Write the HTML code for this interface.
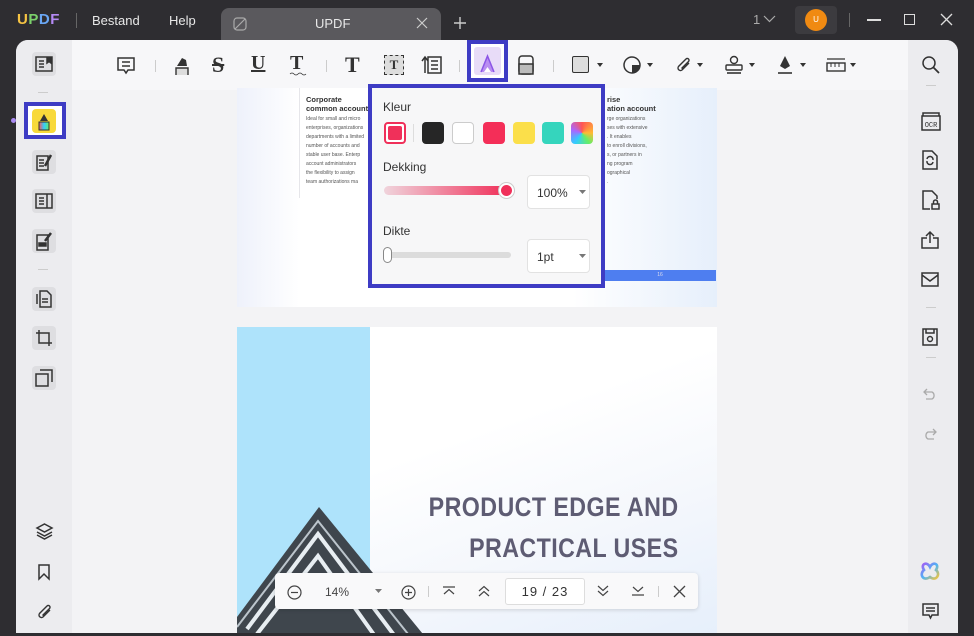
<!DOCTYPE html>
<html><head><meta charset="utf-8"><style>
*{margin:0;padding:0;box-sizing:border-box}
body{width:974px;height:636px;overflow:hidden;background:#2e2d31;font-family:"Liberation Sans",sans-serif;position:relative}
.abs{position:absolute}
svg{position:absolute;overflow:visible}
.tb{color:#e8e8e8;font-size:13px;top:13px}
.ic{fill:none;stroke:#333;stroke-width:1.5}
.sq{position:absolute;width:22px;height:22px;border-radius:4px;top:122px}
.txt{font-size:5px;color:#555;line-height:9px}
</style></head><body>
<!-- top bar -->
<div class="abs" style="left:17px;top:11px;font-weight:bold;font-size:15px;letter-spacing:0.5px"><span style="color:#f6c343">U</span><span style="color:#7bd06b">P</span><span style="color:#6aa7f5">D</span><span style="color:#b58af5">F</span></div>
<div class="abs" style="left:76px;top:13px;width:1px;height:15px;background:#666"></div>
<div class="abs tb" style="left:92px">Bestand</div>
<div class="abs tb" style="left:169px">Help</div>
<div class="abs" style="left:221px;top:8px;width:220px;height:32px;background:#5a595d;border-radius:8px 8px 0 0"></div>
<svg style="left:233px;top:17px" width="14" height="14"><rect x="1" y="1" width="12" height="12" rx="3" fill="none" stroke="#aaa" stroke-width="1.2"/><path d="M2 12L12 2" stroke="#aaa" stroke-width="1.2"/></svg>
<div class="abs tb" style="left:315px;top:16px">UPDF</div>
<svg style="left:417px;top:18px" width="10" height="10"><path d="M0 0L10 10M10 0L0 10" stroke="#ccc" stroke-width="1.2"/></svg>
<svg style="left:454px;top:17px" width="12" height="12"><path d="M6 0V12M0 6H12" stroke="#ccc" stroke-width="1.4"/></svg>
<div class="abs" style="left:753px;top:12px;color:#aaa;font-size:13px">1</div>
<svg style="left:764px;top:16px" width="11" height="7"><path d="M0 0L5.5 5.5L11 0" fill="none" stroke="#aaa" stroke-width="1.2"/></svg>
<div class="abs" style="left:795px;top:6px;width:42px;height:28px;background:#3c3b3f;border-radius:4px"></div>
<div class="abs" style="left:805px;top:9px;width:22px;height:22px;border-radius:50%;background:#f08a12;color:#fff;font-size:8px;text-align:center;line-height:22px">U</div>
<div class="abs" style="left:849px;top:13px;width:1px;height:14px;background:#666"></div>
<div class="abs" style="left:867px;top:19px;width:14px;height:1.5px;background:#ddd"></div>
<div class="abs" style="left:904px;top:14px;width:11px;height:11px;border:1.3px solid #ddd"></div>
<svg style="left:941px;top:14px" width="11" height="11"><path d="M0 0L11 11M11 0L0 11" stroke="#ddd" stroke-width="1.3"/></svg>

<!-- panels -->
<div class="abs" style="left:16px;top:40px;width:942px;height:593px;background:#f3f3f5;border-radius:12px 12px 0 0"></div>
<div class="abs" style="left:16px;top:40px;width:56px;height:593px;background:#ececef;border-radius:12px 0 0 0"></div>
<div class="abs" style="left:908px;top:40px;width:50px;height:593px;background:#ececef;border-radius:0 12px 0 0"></div>
<div class="abs" style="left:72px;top:40px;width:836px;height:50px;background:#f7f7f9"></div>

<!-- pages -->
<div class="abs" style="left:237px;top:88px;width:480px;height:219px;background:linear-gradient(90deg,#eef1fb 0%,#fff 13%,#fff 70%,#e6effb 100%)">
 <div class="abs" style="left:62px;top:0;width:1px;height:110px;background:#e6e6ea"></div>
 <div class="abs" style="left:69px;top:7px;font-size:7.5px;font-weight:bold;color:#333;line-height:9px">Corporate<br>common account</div>
 <div class="abs txt" style="left:69px;top:27px;width:80px">Ideal for small and micro<br>enterprises, organizations<br>departments with a limited<br>number of accounts and<br>stable user base. Enterp<br>account administrators<br>the flexibility to assign<br>team authorizations ma</div>
 <div class="abs" style="left:370px;top:7px;font-size:7.5px;font-weight:bold;color:#333;line-height:9px">rise<br>ation account</div>
 <div class="abs txt" style="left:370px;top:27px;width:90px">rge organizations<br>ses with extensive<br>. It enables<br>to enroll divisions,<br>s, or partners in<br>ng program<br>ographical<br>.</div>
 <div class="abs" style="left:367px;top:182px;width:112px;height:11px;background:#4e7ef0;color:#dde;font-size:5px;text-align:center;line-height:11px">16</div>
</div>
<div class="abs" style="left:237px;top:327px;width:480px;height:306px;background:linear-gradient(160deg,#fff 40%,#f4f7fc 70%,#e6effb 100%);overflow:hidden">
 <div class="abs" style="left:0;top:0;width:133px;height:306px;background:#aee3fb"></div>
 <svg style="left:0;top:172px" width="200" height="140"><path d="M0 118L82 8L190 140H0Z" fill="#3f464d"/><path d="M10 130L81 35L160 140" fill="none" stroke="#e8eef2" stroke-width="4"/><path d="M20 135L81 57L140 140" fill="none" stroke="#e8eef2" stroke-width="4"/><path d="M0 128L81 22L175 140" fill="none" stroke="#bcc5cc" stroke-width="2"/></svg>
 <div class="abs" style="right:38px;top:160px;text-align:right;font-size:27px;font-weight:bold;color:#5e5c73;line-height:41px;letter-spacing:0.5px;transform:scaleX(0.86);transform-origin:right">PRODUCT EDGE AND<br>PRACTICAL USES</div>
</div>

<!-- toolbar icons -->
<svg style="left:117px;top:57px" width="18" height="18" class="ic"><path class="ic" d="M1 1H17V13H11L9 16L7 13H1Z M5 5H13M5 9H13"/></svg>
<div class="abs" style="left:155px;top:60px;width:1px;height:12px;background:#ccc"></div>
<svg style="left:174px;top:56px" width="16" height="20"><path d="M3 10L8 2L12 4L13 10Z" fill="#333"/><path d="M2 19V12H14V19" fill="#ddd" stroke="#333" stroke-width="1.4"/></svg>
<div class="abs" style="left:212px;top:52px;font-size:22px;font-weight:bold;color:#333;text-decoration:line-through;font-family:'Liberation Serif',serif">S</div>
<div class="abs" style="left:251px;top:52px;font-size:20px;font-weight:bold;color:#333;text-decoration:underline;font-family:'Liberation Serif',serif">U</div>
<div class="abs" style="left:290px;top:52px;font-size:20px;font-weight:bold;color:#333;font-family:'Liberation Serif',serif">T</div>
<svg style="left:290px;top:72px" width="18" height="4"><path d="M0 2Q2 0 4 2T8 2T12 2T16 2" fill="none" stroke="#333" stroke-width="0.8"/></svg>
<div class="abs" style="left:326px;top:60px;width:1px;height:12px;background:#ccc"></div>
<div class="abs" style="left:345px;top:52px;font-size:22px;font-weight:bold;color:#333;font-family:'Liberation Serif',serif">T</div>
<div class="abs" style="left:384px;top:55px;width:20px;height:20px;border:1.5px dashed #333;background:#ddd;font-size:13px;font-weight:bold;text-align:center;line-height:17px;font-family:'Liberation Serif',serif;color:#333">T</div>
<svg style="left:421px;top:55px" width="22" height="20" class="ic"><path class="ic" d="M7 2H20V18H7Z M10 6H17M10 10H17M10 14H17 M4 18V3M1 6L4 2L7 6"/></svg>
<div class="abs" style="left:459px;top:60px;width:1px;height:12px;background:#ccc"></div>
<div class="abs" style="left:467px;top:40px;width:41px;height:42px;border:4px solid #3e3cc4;background:#fff"></div>
<div class="abs" style="left:474px;top:47px;width:27px;height:28px;background:#e8dcf8;border-radius:3px"></div>
<svg style="left:479px;top:54px" width="17" height="20"><path d="M2 18L8.5 2L15 18" fill="#b98df2" stroke="#8b55e6" stroke-width="1.5"/><path d="M5 18L8.5 13L12 18" fill="#fff"/></svg>
<svg style="left:518px;top:55px" width="16" height="20"><rect x="1" y="1" width="14" height="18" rx="3" fill="none" stroke="#333" stroke-width="1.5"/><rect x="1" y="9" width="14" height="10" fill="#bbb" stroke="#333" stroke-width="1.5"/></svg>
<div class="abs" style="left:553px;top:60px;width:1px;height:12px;background:#ccc"></div>
<div class="abs" style="left:572px;top:56px;width:17px;height:17px;border:1.5px solid #333;background:#ddd;border-radius:2px"></div>
<svg style="left:597px;top:63px" width="6" height="4"><path d="M0 0H6L3 4Z" fill="#333"/></svg>
<svg style="left:623px;top:56px" width="18" height="18"><circle cx="9" cy="9" r="8" fill="none" stroke="#333" stroke-width="1.5"/><path d="M17 9A8 8 0 0 1 9 17L9 9Z" fill="#333"/></svg>
<svg style="left:647px;top:63px" width="6" height="4"><path d="M0 0H6L3 4Z" fill="#333"/></svg>
<svg style="left:676px;top:56px" width="16" height="18"><path d="M13 7L6 14A2.5 2.5 0 0 1 2.5 10.5L10 3A1.7 1.7 0 0 1 12.5 5.5L5.5 12.5" fill="none" stroke="#333" stroke-width="1.4"/></svg>
<svg style="left:697px;top:63px" width="6" height="4"><path d="M0 0H6L3 4Z" fill="#333"/></svg>
<svg style="left:725px;top:55px" width="18" height="20"><circle cx="9" cy="5" r="3.5" fill="none" stroke="#333" stroke-width="1.4"/><rect x="1" y="10" width="16" height="5" rx="1" fill="none" stroke="#333" stroke-width="1.4"/><path d="M2 18H16" stroke="#333" stroke-width="1.6"/></svg>
<svg style="left:749px;top:63px" width="6" height="4"><path d="M0 0H6L3 4Z" fill="#333"/></svg>
<svg style="left:777px;top:55px" width="16" height="20"><path d="M8 1L13 11L8 14L3 11Z" fill="#333"/><path d="M1 18H15" stroke="#333" stroke-width="1.6"/></svg>
<svg style="left:800px;top:63px" width="6" height="4"><path d="M0 0H6L3 4Z" fill="#333"/></svg>
<svg style="left:826px;top:57px" width="20" height="16"><path d="M1 2H19" stroke="#333" stroke-width="1.2"/><rect x="1" y="6" width="18" height="8" fill="none" stroke="#333" stroke-width="1.4"/><path d="M5 6V10M9 6V10M13 6V10" stroke="#333"/></svg>
<svg style="left:850px;top:63px" width="6" height="4"><path d="M0 0H6L3 4Z" fill="#333"/></svg>

<!-- popup -->
<div class="abs" style="left:368px;top:84px;width:237px;height:204px;border:4px solid #3e3cc4;background:#f7f7f8"></div>
<div class="abs" style="left:383px;top:100px;font-size:12px;color:#333">Kleur</div>
<div class="sq" style="left:384px;border:2px solid #f0305a;background:#fff"><div style="position:absolute;left:2px;top:2px;width:14px;height:14px;background:#f0305a;border-radius:2px"></div></div>
<div class="abs" style="left:413px;top:124px;width:1px;height:18px;background:#ddd"></div>
<div class="sq" style="left:422px;background:#262626"></div>
<div class="sq" style="left:452px;background:#fff;border:1px solid #ccc"></div>
<div class="sq" style="left:483px;background:#f42e58"></div>
<div class="sq" style="left:513px;background:#fbdf4a"></div>
<div class="sq" style="left:542px;background:#35d5bd"></div>
<div class="sq" style="left:571px;background:conic-gradient(#f55 0,#fb3 25%,#6e6 40%,#3cf 60%,#a6f 80%,#f55)"></div>
<div class="abs" style="left:383px;top:160px;font-size:12px;color:#333">Dekking</div>
<div class="abs" style="left:384px;top:186px;width:123px;height:9px;border-radius:5px;background:linear-gradient(90deg,#f0d4dc,#f0305a)"></div>
<div class="abs" style="left:499px;top:183px;width:15px;height:15px;border-radius:50%;background:#f0305a;border:2px solid #fff;box-shadow:0 0 0 1px #ccc"></div>
<div class="abs" style="left:527px;top:175px;width:63px;height:34px;background:#fff;border:1px solid #e2e2e2;border-radius:4px;font-size:12px;color:#333;padding:10px 0 0 9px">100%</div>
<svg style="left:579px;top:190px" width="7" height="4"><path d="M0 0H7L3.5 4Z" fill="#777"/></svg>
<div class="abs" style="left:383px;top:224px;font-size:12px;color:#333">Dikte</div>
<div class="abs" style="left:386px;top:252px;width:125px;height:6px;border-radius:3px;background:#dcdcdc"></div>
<div class="abs" style="left:383px;top:247px;width:9px;height:16px;border-radius:5px;background:#fff;border:1px solid #888"></div>
<div class="abs" style="left:527px;top:239px;width:63px;height:34px;background:#fff;border:1px solid #e2e2e2;border-radius:4px;font-size:12px;color:#333;padding:10px 0 0 9px">1pt</div>
<svg style="left:579px;top:254px" width="7" height="4"><path d="M0 0H7L3.5 4Z" fill="#777"/></svg>

<!-- left sidebar -->
<div class="abs" style="left:32px;top:52px;width:24px;height:24px;background:#dedee1;border-radius:4px"></div>
<svg style="left:35px;top:56px" width="18" height="16" class="ic"><path class="ic" d="M1 1H17V15H1Z M4 5H9M4 8H9M4 11H9"/><path d="M12 1V7L14 5.5L16 7V1" fill="#333"/></svg>
<div class="abs" style="left:38px;top:92px;width:10px;height:1px;background:#ccc"></div>
<div class="abs" style="left:24px;top:102px;width:42px;height:37px;border:4px solid #3e3cc4;background:#fff"></div>
<div class="abs" style="left:32px;top:109px;width:24px;height:24px;background:#f8d93a;border-radius:4px"></div>
<svg style="left:36px;top:112px" width="16" height="20"><path d="M4 9L8 2L12 9Z" fill="#333"/><path d="M3 10H13V18H3Z" fill="url(#rb)" stroke="#333"/><defs><linearGradient id="rb"><stop offset="0" stop-color="#f55"/><stop offset=".5" stop-color="#3cf"/><stop offset="1" stop-color="#6e6"/></linearGradient></defs></svg>
<div class="abs" style="left:11px;top:118px;width:5px;height:5px;border-radius:50%;background:#a98af0"></div>
<div class="abs" style="left:32px;top:150px;width:24px;height:24px;background:#dedee1;border-radius:4px"></div>
<svg style="left:36px;top:153px" width="17" height="18" class="ic"><path class="ic" d="M1 3H12V17H1Z M3 7H8M3 10H8M3 13H8"/><path d="M9 13L15 2" stroke="#333" stroke-width="2.5"/></svg>
<div class="abs" style="left:32px;top:189px;width:24px;height:24px;background:#dedee1;border-radius:4px"></div>
<svg style="left:35px;top:193px" width="18" height="16" class="ic"><path class="ic" d="M1 1H17V15H1Z M12 1V15 M4 5H9M4 8H9M4 11H9"/></svg>
<div class="abs" style="left:32px;top:229px;width:24px;height:24px;background:#dedee1;border-radius:4px"></div>
<svg style="left:36px;top:231px" width="17" height="20" class="ic"><path class="ic" d="M1 4H12V19H1Z"/><path d="M3 12H10V15H3Z" fill="#333"/><path d="M9 10L15 2" stroke="#333" stroke-width="2.5"/></svg>
<div class="abs" style="left:38px;top:269px;width:10px;height:1px;background:#ccc"></div>
<div class="abs" style="left:32px;top:287px;width:24px;height:24px;background:#dedee1;border-radius:4px"></div>
<svg style="left:36px;top:290px" width="16" height="18" class="ic"><path class="ic" d="M4 1H11L15 5V17H4Z M1 4V14 M6 9H12M6 12H12"/></svg>
<div class="abs" style="left:32px;top:326px;width:24px;height:24px;background:#dedee1;border-radius:4px"></div>
<svg style="left:35px;top:329px" width="18" height="18" class="ic"><path class="ic" d="M4 1V14H17 M1 4H14V17"/></svg>
<div class="abs" style="left:32px;top:366px;width:24px;height:24px;background:#dedee1;border-radius:4px"></div>
<svg style="left:35px;top:369px" width="18" height="18" class="ic"><path class="ic" d="M5 1H17V13 M1 5H13V17H1Z"/></svg>
<svg style="left:36px;top:523px" width="17" height="17" class="ic"><path class="ic" d="M8.5 1L16 5L8.5 9L1 5Z M1 9L8.5 13L16 9 M1 12L8.5 16L16 12"/></svg>
<svg style="left:38px;top:564px" width="12" height="16" class="ic"><path class="ic" d="M1 1H11V15L6 10L1 15Z"/></svg>
<svg style="left:37px;top:603px" width="16" height="18"><path d="M13 7L6 14A2.5 2.5 0 0 1 2.5 10.5L10 3A1.7 1.7 0 0 1 12.5 5.5L5.5 12.5" fill="none" stroke="#333" stroke-width="1.4"/></svg>

<!-- right sidebar -->
<svg style="left:922px;top:56px" width="18" height="18" class="ic"><circle cx="7" cy="7" r="6" fill="none" stroke="#333" stroke-width="1.5"/><path d="M11 11L17 17" stroke="#333" stroke-width="1.8"/></svg>
<div class="abs" style="left:926px;top:85px;width:10px;height:1px;background:#ccc"></div>
<svg style="left:921px;top:111px" width="20" height="20" class="ic"><path class="ic" d="M2 5V2H18V5 M1 5H19V19H1Z"/><text x="10" y="16" font-size="7" text-anchor="middle" font-family="Liberation Mono" fill="#333" stroke="none">OCR</text></svg>
<svg style="left:922px;top:150px" width="16" height="20" class="ic"><path class="ic" d="M1 1H10L15 6V19H1Z M5 9A3 3 0 0 1 11 10 M11 12A3 3 0 0 1 5 11"/></svg>
<svg style="left:922px;top:190px" width="18" height="20" class="ic"><path class="ic" d="M8 19H1V1H10L15 6V9 M10 14H17V19H10Z M11.5 14V12A2 2 0 0 1 15.5 12V14"/></svg>
<svg style="left:921px;top:231px" width="18" height="18" class="ic"><path class="ic" d="M6 7H1V17H17V7H12 M9 12V1M5 5L9 1L13 5"/></svg>
<svg style="left:921px;top:272px" width="18" height="15" class="ic"><path class="ic" d="M1 1H17V14H1Z M1 3L9 9L17 3"/></svg>
<div class="abs" style="left:926px;top:307px;width:10px;height:1px;background:#ccc"></div>
<svg style="left:922px;top:328px" width="16" height="18" class="ic"><path class="ic" d="M1 1H15V17H1Z M4 1V5H12V1"/><circle cx="8" cy="11" r="2.5" fill="none" stroke="#333" stroke-width="1.4"/></svg>
<div class="abs" style="left:926px;top:357px;width:10px;height:1px;background:#ccc"></div>
<svg style="left:923px;top:388px" width="14" height="12"><path d="M4 1L1 4L4 7M1 4H9A4 4 0 0 1 9 11H3" fill="none" stroke="#aaa" stroke-width="1.3"/></svg>
<svg style="left:923px;top:428px" width="14" height="12"><path d="M10 1L13 4L10 7M13 4H5A4 4 0 0 0 5 11H11" fill="none" stroke="#aaa" stroke-width="1.3"/></svg>
<svg style="left:920px;top:562px" width="20" height="20"><path d="M10 5C7 -1 0 2 4 8C-1 12 3 20 10 15C16 20 21 12 16 8C20 2 13 -1 10 5Z" fill="none" stroke="url(#cg)" stroke-width="2.6"/><defs><linearGradient id="cg" x1="0" y1="0" x2="1" y2="1"><stop offset="0" stop-color="#a45cf5"/><stop offset=".5" stop-color="#4fb5f5"/><stop offset="1" stop-color="#f5c53a"/></linearGradient></defs></svg>
<svg style="left:922px;top:603px" width="17" height="17" class="ic"><path class="ic" d="M1 1H16V12H10L8.5 15L7 12H1Z M4 5H13M4 8H13"/></svg>

<!-- bottom nav bar -->
<div class="abs" style="left:275px;top:573px;width:423px;height:36px;background:#f9f9fa;border-radius:4px;box-shadow:0 1px 4px rgba(0,0,0,.15)"></div>
<svg style="left:287px;top:585px" width="15" height="15"><circle cx="7.5" cy="7.5" r="6.5" fill="none" stroke="#444" stroke-width="1.2"/><path d="M4 7.5H11" stroke="#444" stroke-width="1.2"/></svg>
<div class="abs" style="left:325px;top:585px;font-size:12px;color:#444">14%</div>
<svg style="left:375px;top:589px" width="7" height="4"><path d="M0 0H7L3.5 4Z" fill="#777"/></svg>
<svg style="left:401px;top:585px" width="15" height="15"><circle cx="7.5" cy="7.5" r="6.5" fill="none" stroke="#444" stroke-width="1.2"/><path d="M4 7.5H11M7.5 4V11" stroke="#444" stroke-width="1.2"/></svg>
<div class="abs" style="left:428px;top:586px;width:1px;height:11px;background:#ccc"></div>
<svg style="left:443px;top:586px" width="12" height="10"><path d="M0 1H12M1 8L6 3.5L11 8" fill="none" stroke="#444" stroke-width="1.2"/></svg>
<svg style="left:478px;top:585px" width="12" height="12"><path d="M1 6L6 1.5L11 6M1 11L6 6.5L11 11" fill="none" stroke="#444" stroke-width="1.2"/></svg>
<div class="abs" style="left:505px;top:578px;width:80px;height:27px;background:#fff;border:1px solid #ddd;border-radius:3px;font-size:13px;color:#333;text-align:center;line-height:25px;letter-spacing:1px">19 / 23</div>
<svg style="left:597px;top:585px" width="12" height="12"><path d="M1 1L6 5.5L11 1M1 6L6 10.5L11 6" fill="none" stroke="#444" stroke-width="1.2"/></svg>
<svg style="left:632px;top:586px" width="12" height="10"><path d="M1 1L6 5.5L11 1M0 9H12" fill="none" stroke="#444" stroke-width="1.2"/></svg>
<div class="abs" style="left:658px;top:586px;width:1px;height:11px;background:#ccc"></div>
<svg style="left:674px;top:586px" width="11" height="11"><path d="M0 0L11 11M11 0L0 11" stroke="#444" stroke-width="1.3"/></svg>
</body></html>
